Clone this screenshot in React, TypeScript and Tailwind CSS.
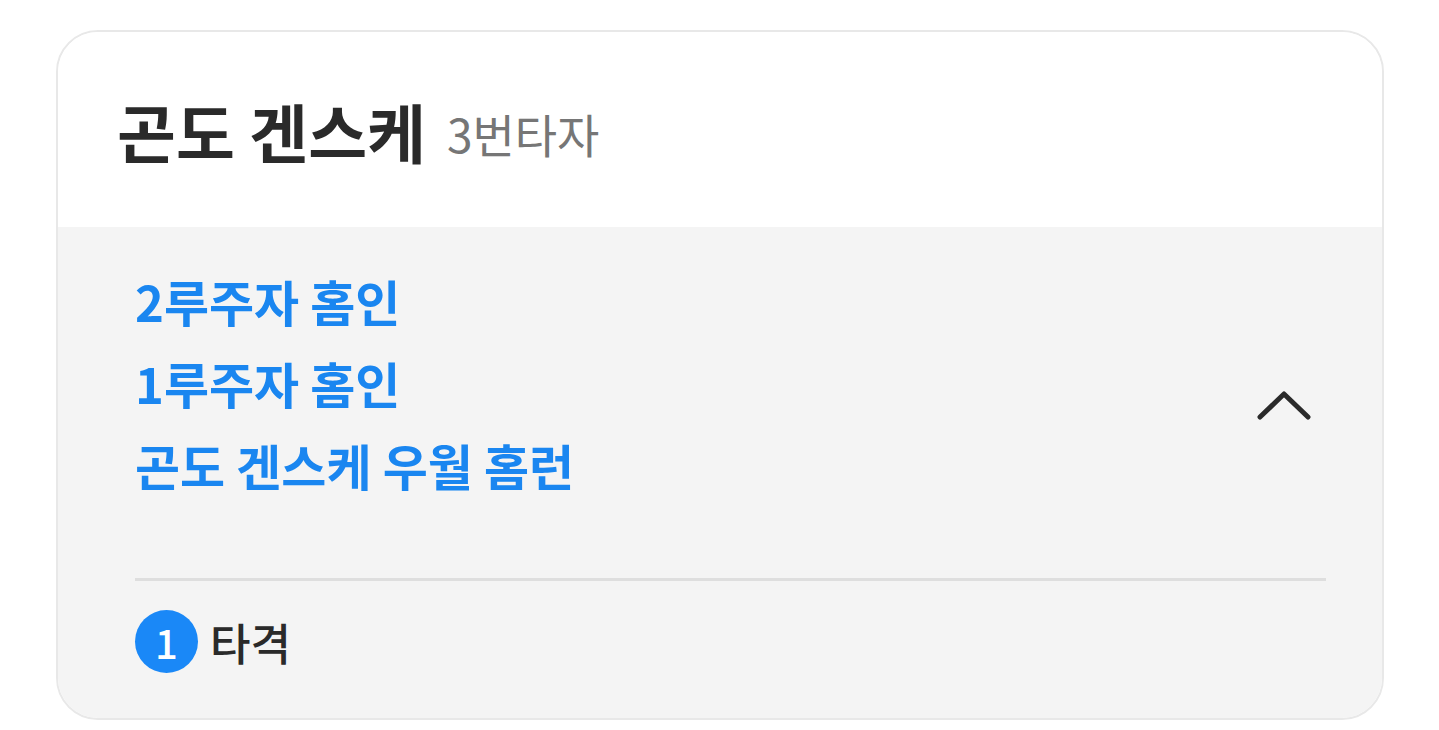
import React from "react";

export default function App() {
  const font = { fontFamily: '"Noto Sans CJK KR", "Noto Sans", sans-serif' };
  return (
    <div className="w-[1439px] h-[730px] bg-white pt-[30px] pl-[56px]" style={font}>
      <div className="w-[1328px] h-[690px] rounded-[42px] border-2 border-[#e8e8e8] overflow-hidden flex flex-col">
        <div className="h-[195px] bg-white flex items-center pl-[59px] gap-[21px]">
          <span className="text-[64px] font-bold text-[#2a2a2a] leading-none">곤도 겐스케</span>
          <span className="text-[46px] text-[#767676] leading-none mt-[6px]">3번타자</span>
        </div>
        <div className="flex-1 bg-[#f4f4f4] pl-[77px] pr-[56px] flex flex-col">
          <div className="h-[351px] flex items-start justify-between pt-[33px]">
            <div className="flex flex-col text-[49px] font-bold text-[#1a86f0] leading-[82px]">
              <span>2루주자 홈인</span>
              <span>1루주자 홈인</span>
              <span>곤도 겐스케 우월 홈런</span>
            </div>
            <svg className="mt-[129px] mr-[14px]" width="56" height="32" viewBox="0 0 56 32" fill="none">
              <path d="M4 28 L28 5 L52 28" stroke="#2a2a2a" strokeWidth="5" strokeLinecap="round" strokeLinejoin="round" />
            </svg>
          </div>
          <div className="border-t-[3px] border-[#dedede]" />
          <div className="flex-1 flex items-center gap-[12px] pb-[16px]">
            <div className="w-[63px] h-[63px] rounded-full bg-[#1a88f7] flex items-center justify-center text-white text-[40px] font-medium leading-none">
              1
            </div>
            <span className="text-[44px] text-[#2a2a2a] leading-none font-medium">타격</span>
          </div>
        </div>
      </div>
    </div>
  );
}
